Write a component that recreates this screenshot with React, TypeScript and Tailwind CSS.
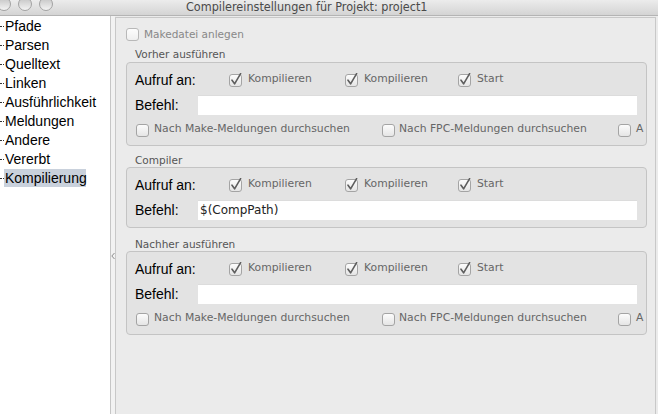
import React from "react";

function Box({ checked = false, light = false }: { checked?: boolean; light?: boolean }) {
  return (
    <svg width="14" height="14" viewBox="0 0 14 14" className="shrink-0">
      <defs>
        <linearGradient id={light ? "gl" : "gb"} x1="0" y1="0" x2="0" y2="1">
          <stop offset="0" stopColor="#fdfdfd" />
          <stop offset="1" stopColor={light ? "#eeeeee" : "#e4e4e4"} />
        </linearGradient>
      </defs>
      <rect x="0.5" y="1.5" width="12" height="12" rx="2.5" fill={`url(#${light ? "gl" : "gb"})`} stroke={light ? "#b8b8b8" : "#a4a4a4"} />
      {checked && (
        <path d="M3 7.2 L5.6 10.8 L11.6 0.6" fill="none" stroke="#5e5e5e" strokeWidth="1.6" strokeLinecap="round" strokeLinejoin="round" />
      )}
    </svg>
  );
}

function Check({ label, checked = false, w, gap = "gap-[5px]" }: { label: string; checked?: boolean; w?: string; gap?: string }) {
  return (
    <div className={`flex items-center ${gap} ${w ?? ""} shrink-0`}>
      <Box checked={checked} />
      <span className="font-['DejaVu_Sans',sans-serif] text-[10.8px] text-[#666666] leading-none whitespace-nowrap">{label}</span>
    </div>
  );
}

function AufrufRow() {
  return (
    <div className="flex items-center h-[25px]">
      <span className="w-[94px] shrink-0 font-['Liberation_Sans',sans-serif] text-[14px] text-black leading-none">Aufruf an:</span>
      <Check label="Kompilieren" checked w="w-[116px]" />
      <Check label="Kompilieren" checked w="w-[113px]" />
      <Check label="Start" checked />
    </div>
  );
}

function BefehlRow({ value = "" }: { value?: string }) {
  return (
    <div className="flex items-center h-[25px]">
      <span className="w-[63px] shrink-0 font-['Liberation_Sans',sans-serif] text-[14px] text-black leading-none">Befehl:</span>
      <div className="flex-1 min-w-0 h-[20px] bg-white border-t border-[#dcdcdc] flex items-center pl-[2px] font-['DejaVu_Sans',sans-serif] text-[12px] text-[#222222]">
        {value}
      </div>
    </div>
  );
}

function SearchRow() {
  return (
    <div className="flex items-center h-[25px] pl-[1px] mr-[-9px] overflow-hidden">
      <Check label="Nach Make-Meldungen durchsuchen" w="w-[246px]" gap="gap-[4px]" />
      <Check label="Nach FPC-Meldungen durchsuchen" w="w-[236px]" gap="gap-[3px]" />
      <Check label="A" gap="gap-[4px]" />
    </div>
  );
}

function GroupLabel({ text, mt }: { text: string; mt: string }) {
  return (
    <div className={`h-[14px] ${mt} pl-[9px] flex items-center font-['DejaVu_Sans',sans-serif] text-[10.5px] text-[#555555] leading-none`}>
      {text}
    </div>
  );
}

export default function App() {
  const tree = ["Pfade", "Parsen", "Quelltext", "Linken", "Ausführlichkeit", "Meldungen", "Andere", "Vererbt", "Kompilierung"];
  return (
    <div className="w-[658px] h-[414px] overflow-hidden flex flex-col bg-[#ebebeb]">
      {/* Title bar */}
      <div className="h-[16px] shrink-0 flex items-center bg-linear-to-b from-[#ececec] to-[#d4d4d4] border-b border-[#b4b4b4] overflow-hidden">
        <div className="flex gap-[7px] ml-[-3px] mt-[-7px] shrink-0">
          <div className="w-[14px] h-[14px] rounded-full border border-[#a2a2a2] bg-linear-to-b from-[#c4c4c4] to-[#f4f4f4]" />
          <div className="w-[14px] h-[14px] rounded-full border border-[#a2a2a2] bg-linear-to-b from-[#c4c4c4] to-[#f4f4f4]" />
          <div className="w-[14px] h-[14px] rounded-full border border-[#a2a2a2] bg-linear-to-b from-[#c4c4c4] to-[#f4f4f4]" />
        </div>
        <span className="ml-[133px] mt-[-1px] font-['DejaVu_Sans_Condensed','DejaVu_Sans',sans-serif] text-[12.5px] text-[#4a4a4a] leading-none whitespace-nowrap">
          Compilereinstellungen für Projekt: project1
        </span>
      </div>

      {/* Body */}
      <div className="flex flex-1 min-h-0">
        {/* Tree */}
        <div className="w-[111px] shrink-0 bg-white border-r border-[#c6c6c6] flex flex-col">
          {tree.map((t) => (
            <div key={t} className="h-[19px] flex items-center">
              <span className="w-[4px] shrink-0 border-t border-dotted border-[#333333] mt-[2px]" />
              <span
                className={`font-['Liberation_Sans',sans-serif] text-[14px] text-black leading-none px-[1px] h-[18px] flex items-center ${
                  t === "Kompilierung" ? "bg-[#c9d1dc] w-[82px]" : ""
                }`}
              >
                {t}
              </span>
            </div>
          ))}
        </div>

        {/* Splitter */}
        <div className="w-[4px] shrink-0 bg-[#f2f2f2] flex flex-col">
          <svg width="4" height="8" viewBox="0 0 4 8" className="mt-[236px]">
            <path d="M3.5 1 L0.8 4 L3.5 7" fill="none" stroke="#8a8a8a" strokeWidth="1" />
          </svg>
        </div>

        {/* Panel */}
        <div className="flex-1 min-w-0 mt-[1px] mr-[2px] border-l border-t border-r border-[#c8c8c8] bg-[#ebebeb] pl-[10px] pr-[8px] flex flex-col">
          <div className="h-[14px] mt-[9px] flex items-center gap-[4px]">
            <Box light />
            <span className="font-['DejaVu_Sans',sans-serif] text-[10.5px] text-[#888888] leading-none">Makedatei anlegen</span>
          </div>

          <GroupLabel text="Vorher ausführen" mt="mt-[6px]" />
          <div className="mt-[1px] min-w-0 overflow-hidden rounded-[4px] border border-[#c4c4c4] bg-[#e3e3e3] pl-[8px] pr-[9px] pt-[4px] pb-[3px]">
            <AufrufRow />
            <BefehlRow />
            <SearchRow />
          </div>

          <GroupLabel text="Compiler" mt="mt-[7px]" />
          <div className="min-w-0 overflow-hidden rounded-[4px] border border-[#c4c4c4] bg-[#e3e3e3] pl-[8px] pr-[9px] pt-[4px] pb-[5px]">
            <AufrufRow />
            <BefehlRow value="$(CompPath)" />
          </div>

          <GroupLabel text="Nachher ausführen" mt="mt-[9px]" />
          <div className="min-w-0 overflow-hidden rounded-[4px] border border-[#c4c4c4] bg-[#e3e3e3] pl-[8px] pr-[9px] pt-[4px] pb-[3px]">
            <AufrufRow />
            <BefehlRow />
            <SearchRow />
          </div>
        </div>
      </div>
    </div>
  );
}
